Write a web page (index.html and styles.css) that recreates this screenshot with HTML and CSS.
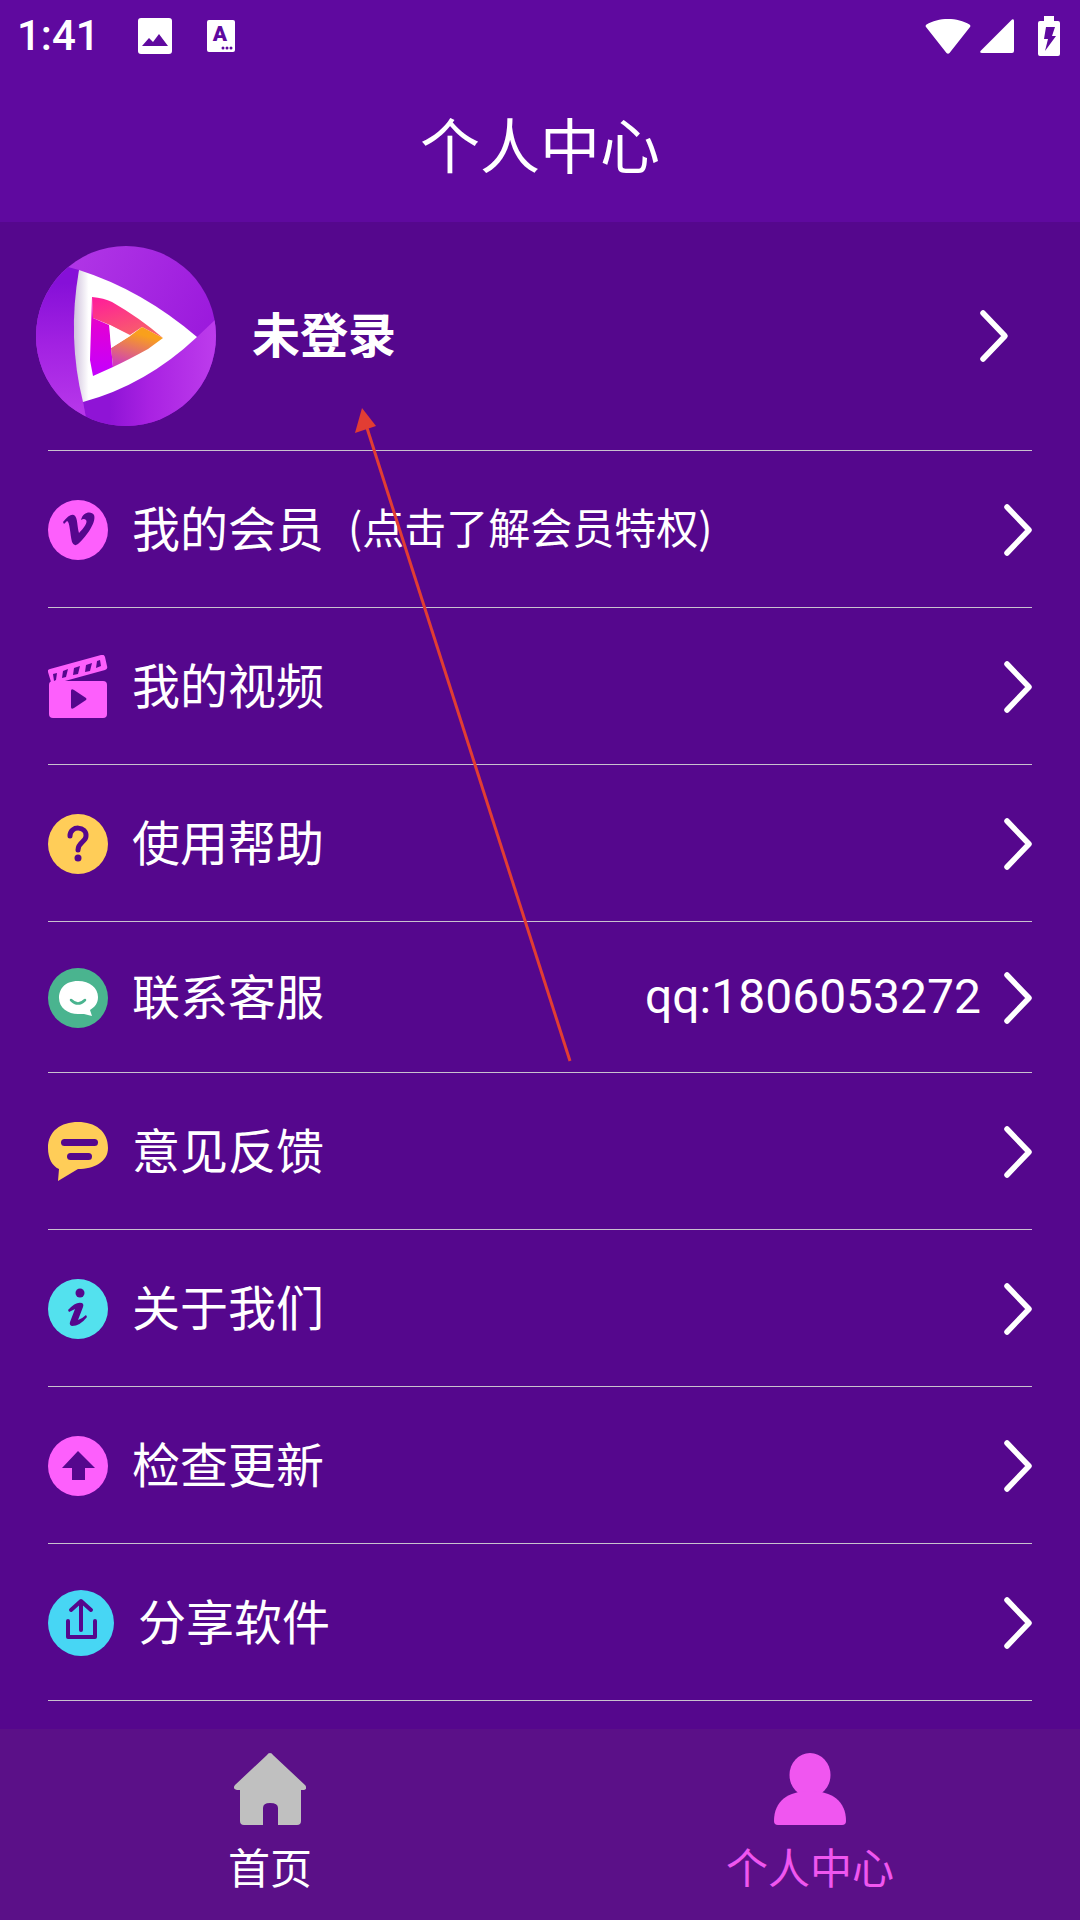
FILE: index.html
```html
<!DOCTYPE html>
<html>
<head>
  <title>个人中心</title>
  <link rel="stylesheet" href="styles.css">
</head>
<body>
  <div class="page">
    <div class="header">
      <div class="status-bar">
        <span class="time">1:41</span>
        <svg class="status-photo" viewBox="0 0 34 36"><rect width="34" height="36" rx="3" fill="#fff"/><path d="M4 28l7-8 4 4 6-8 9 12z" fill="#5f099f"/></svg>
        <svg class="status-a" viewBox="0 0 28 32"><rect width="28" height="32" rx="2" fill="#fff"/><text x="13" y="21" class="status-a-text">A</text><circle cx="16" cy="28" r="1.5" fill="#5f099f"/><circle cx="20" cy="28" r="1.5" fill="#5f099f"/><circle cx="24" cy="28" r="1.5" fill="#5f099f"/></svg>
        <span class="status-spacer"></span>
        <svg class="status-wifi" viewBox="0 0 46 36"><path d="M1 9Q0 8 1.500 6.500C13 -1 33 -1 44.500 6.500Q46 8 45 9L24.500 35Q23 36.500 21.500 35z" fill="#fff"/></svg>
        <svg class="status-signal" viewBox="0 0 34 34"><path d="M32 .5Q34 -.5 34 2V32Q34 34 32 34H2Q-.5 34 .5 32z" fill="#fff"/></svg>
        <svg class="status-battery" viewBox="0 0 22 40"><path d="M6 0H16V5H20Q22 5 22 7V38Q22 40 20 40H2Q0 40 0 38V7Q0 5 2 5H6z" fill="#fff"/><path d="M8 11H17L14 20H18L7 35L10 23H6z" fill="#5f099f"/></svg>
      </div>
      <div class="title">个人中心</div>
    </div>

    <div class="content">
      <div class="profile">
        <svg class="avatar" viewBox="0 0 180 180">
          <defs>
            <clipPath id="avatarClip"><circle cx="90" cy="90" r="90"/></clipPath>
            <linearGradient id="avatarTop" x1="0" y1="0" x2="1" y2="0.5"><stop offset="0" stop-color="#b53ce8"/><stop offset="1" stop-color="#9a18dc"/></linearGradient>
            <linearGradient id="avatarBottom" x1="0" y1="0" x2="1" y2="0"><stop offset="0.2" stop-color="#8f14d6"/><stop offset="0.5" stop-color="#a922e2"/><stop offset="1" stop-color="#bd3cec"/></linearGradient>
            <linearGradient id="avatarLeft" x1="0" y1="0" x2="0" y2="1"><stop offset="0.1" stop-color="#8610d8"/><stop offset="0.5" stop-color="#a322e2"/><stop offset="0.9" stop-color="#b636ea"/></linearGradient>
            <linearGradient id="innerLeft" x1="0" y1="0" x2="0" y2="1"><stop offset="0" stop-color="#f010a8"/><stop offset="0.4" stop-color="#e000d8"/><stop offset="1" stop-color="#c400ff"/></linearGradient>
            <linearGradient id="innerTop" x1="0" y1="0" x2="0.5" y2="1"><stop offset="0" stop-color="#ff1a9c"/><stop offset="1" stop-color="#f8606a"/></linearGradient>
            <linearGradient id="innerBottom" x1="0.7" y1="0" x2="0.3" y2="1"><stop offset="0.2" stop-color="#f9a01c"/><stop offset="1" stop-color="#d040b8"/></linearGradient>
            <linearGradient id="whiteEdge" x1="0" y1="0" x2="1" y2="0"><stop offset="0" stop-color="#cfc2dc"/><stop offset="0.12" stop-color="#fff"/></linearGradient>
          </defs>
          <g clip-path="url(#avatarClip)">
            <rect width="180" height="180" fill="url(#avatarTop)"/>
            <path d="M47 156L161 91L180 73V180H60L50 172z" fill="url(#avatarBottom)"/>
            <path d="M32 21L43 24L38 91L47 156L50 172L0 180V30z" fill="url(#avatarLeft)"/>
          </g>
          <path d="M43 24Q106 44 161 91Q110 139 47 156Q31 92 43 24z" fill="url(#whiteEdge)"/>
          <path d="M56 51Q68 52 76 56Q104 72 127 92L106 81L94 89L74 79L57 72z" fill="url(#innerTop)"/>
          <path d="M56 51L57 72L73 79L77 121L57 130L54 114z" fill="url(#innerLeft)"/>
          <path d="M75 102L94 90L106 81L127 92L112 103Q92 114 77 121z" fill="url(#innerBottom)"/>
          <path d="M74 79L94 90L75 102z" fill="#fff"/>
        </svg>
        <span class="profile-name">未登录</span>
        <svg class="chevron chevron-profile" viewBox="0 0 30 54"><path d="M4 4L26 27L4 50"/></svg>
      </div>

      <div class="row">
        <svg class="icon" viewBox="0 0 60 60"><circle cx="30" cy="30" r="30" fill="#fd5ffc"/><path d="M15 22Q22 13 26 15C30 17 29 28 31 33C36 28 40 22 38 20Q36 18 33 20C35 11 44 11 46 15C49 23 36 39 30 44Q26 47 24 42C22 34 22 22 19 21L16 24z" fill="#55078d"/></svg>
        <span class="label">我的会员</span>
        <span class="label-note">(点击了解会员特权)</span>
        <svg class="chevron" viewBox="0 0 30 54"><path d="M4 4L26 27L4 50"/></svg>
      </div>

      <div class="row">
        <svg class="icon icon-tall" viewBox="0 0 60 64"><path d="M0 17Q-1 15 2 14L53 0Q56 -1 57 2L59 11Q60 14 57 15L6 29Q4 30 3 27z" fill="#fd5ffc"/><path d="M5 19L9 18L8 25L6 26zM15 16L20 14L18 22L14 23zM26 13L32 11L30 19L25 20zM38 10L44 8L42 16L37 17zM49 6L52 5L53 11L48 13z" fill="#55078d"/><rect x="1" y="26" width="58" height="37" rx="4" fill="#fd5ffc"/><path d="M23 36Q23 33 26 35L38 43Q39 44 38 45L26 53Q23 55 23 52z" fill="#55078d"/></svg>
        <span class="label">我的视频</span>
        <svg class="chevron" viewBox="0 0 30 54"><path d="M4 4L26 27L4 50"/></svg>
      </div>

      <div class="row">
        <svg class="icon" viewBox="0 0 60 60"><circle cx="30" cy="30" r="30" fill="#ffcd58"/><path class="icon-stroke" d="M22 22C22 11 39 12 38 22C38 28 30 28 30 36" stroke-width="5"/><circle cx="30" cy="44" r="3.500" fill="#55078d"/></svg>
        <span class="label">使用帮助</span>
        <svg class="chevron" viewBox="0 0 30 54"><path d="M4 4L26 27L4 50"/></svg>
      </div>

      <div class="row row-short">
        <svg class="icon" viewBox="0 0 60 60"><circle cx="30" cy="30" r="30" fill="#4ab48f"/><path d="M30 13C16 13 11 22 11 30C11 40 20 46 30 46H36L44 48L42 42C47 39 50 35 50 29C50 20 42 13 30 13z" fill="#fff"/><path class="icon-stroke icon-stroke-green" d="M23 32Q30 39 37 32" stroke-width="2.500"/></svg>
        <span class="label">联系客服</span>
        <span class="row-value">qq:1806053272</span>
        <svg class="chevron chevron-value" viewBox="0 0 30 54"><path d="M4 4L26 27L4 50"/></svg>
      </div>

      <div class="row">
        <svg class="icon" viewBox="0 0 60 60"><path d="M30 0C47 0 60 9 60 26C60 40 46 47 30 47L10 59L11 47C4 44 0 36 0 26C0 9 13 0 30 0z" fill="#ffcd58"/><rect x="13" y="17" width="37" height="7" rx="3.500" fill="#55078d"/><rect x="19" y="31" width="25" height="7" rx="3.500" fill="#55078d"/></svg>
        <span class="label">意见反馈</span>
        <svg class="chevron" viewBox="0 0 30 54"><path d="M4 4L26 27L4 50"/></svg>
      </div>

      <div class="row">
        <svg class="icon" viewBox="0 0 60 60"><circle cx="30" cy="30" r="30" fill="#53e1ee"/><circle cx="32" cy="14" r="4.500" fill="#55078d"/><path d="M20 31Q28 22 34 24Q36 25 35 28L30 41Q35 39 38 36L39 38Q32 47 24 47Q21 46 22 43L27 30L21 33z" fill="#55078d"/></svg>
        <span class="label">关于我们</span>
        <svg class="chevron" viewBox="0 0 30 54"><path d="M4 4L26 27L4 50"/></svg>
      </div>

      <div class="row">
        <svg class="icon" viewBox="0 0 60 60"><circle cx="30" cy="30" r="30" fill="#fd5ffc"/><path d="M30 15L47 32H37V44H24V32H14z" fill="#55078d"/></svg>
        <span class="label">检查更新</span>
        <svg class="chevron" viewBox="0 0 30 54"><path d="M4 4L26 27L4 50"/></svg>
      </div>

      <div class="row">
        <svg class="icon icon-wide" viewBox="0 0 66 66"><circle cx="33" cy="33" r="33" fill="#47d6f4"/><path class="icon-stroke" d="M33 40V12M23 20L33 11L43 20M20 31V47H47V31" stroke-width="4"/></svg>
        <span class="label">分享软件</span>
        <svg class="chevron" viewBox="0 0 30 54"><path d="M4 4L26 27L4 50"/></svg>
      </div>
    </div>

    <div class="tabbar">
      <div class="tab">
        <svg class="tab-icon" viewBox="0 0 72 72"><path d="M36 0Q38 0 39 2L71 32Q74 36 70 37H67V68Q67 72 63 72H44V55Q44 50 36 50Q29 50 29 55V72H10Q6 72 6 68V37H3Q-2 36 1 32L33 2Q34 0 36 0z" fill="#c0c0c0"/></svg>
        <span class="tab-label">首页</span>
      </div>
      <div class="tab tab-active">
        <svg class="tab-icon" viewBox="0 0 72 72"><ellipse cx="36" cy="22" rx="20.500" ry="22" fill="#f056f0"/><path d="M0 68C0 48 14 38 36 38C58 38 72 48 72 68Q72 72 68 72H4Q0 72 0 68z" fill="#f056f0"/></svg>
        <span class="tab-label">个人中心</span>
      </div>
    </div>

    <svg class="annotation" viewBox="0 0 1080 1920">
      <path d="M570 1061L367 428" stroke="#e23d33" stroke-width="3" fill="none"/>
      <path d="M362 408L355 433L376 426z" fill="#e23d33"/>
    </svg>
  </div>
</body>
</html>
```

FILE: styles.css
```css
html, body {
  margin: 0;
  padding: 0;
}

body {
  font-family: "Noto Sans CJK SC", "Noto Sans", sans-serif;
  color: #fff;
}

.page {
  position: relative;
  width: 1080px;
  height: 1920px;
  display: flex;
  flex-direction: column;
  overflow: hidden;
  background-color: #55078d;
}

.header {
  height: 222px;
  background-color: #5f099f;
}

.status-bar {
  height: 71px;
  display: flex;
  align-items: center;
  padding: 0 20px 0 17px;
}

.time {
  width: 121px;
  font-family: Roboto, sans-serif;
  font-size: 42px;
  font-weight: 500;
}

.status-photo {
  width: 34px;
  height: 36px;
}

.status-a {
  width: 28px;
  height: 32px;
  margin-left: 35px;
}

.status-a-text {
  font-family: Roboto, sans-serif;
  font-size: 21px;
  font-weight: 900;
  text-anchor: middle;
  fill: #5f099f;
}

.status-spacer {
  flex: 1;
}

.status-wifi {
  width: 46px;
  height: 36px;
}

.status-signal {
  width: 34px;
  height: 34px;
  margin-left: 9px;
}

.status-battery {
  width: 22px;
  height: 40px;
  margin-left: 24px;
}

.title {
  height: 150px;
  line-height: 144px;
  text-align: center;
  font-size: 60px;
}

.content {
  flex: 1;
}

.profile {
  height: 229px;
  display: flex;
  align-items: center;
  padding: 0 71px 1px 36px;
  box-sizing: border-box;
  position: relative;
}

.profile::after,
.row::after {
  content: "";
  position: absolute;
  left: 48px;
  right: 48px;
  bottom: 0;
  height: 1px;
  background-color: #c9c1cf;
}

.avatar {
  width: 180px;
  height: 180px;
  margin-right: 36px;
}

.profile-name {
  flex: 1;
  font-size: 48px;
  font-weight: 700;
  position: relative;
  top: -4px;
}

.row {
  position: relative;
  height: 157px;
  display: flex;
  align-items: center;
  padding: 0 47px 0 48px;
  box-sizing: border-box;
}

.row-short {
  height: 151px;
}

.icon {
  width: 60px;
  height: 60px;
  margin-right: 24px;
  flex: none;
}

.icon-tall {
  height: 64px;
}

.icon-wide {
  width: 66px;
  height: 66px;
}

.icon-stroke {
  fill: none;
  stroke: #55078d;
  stroke-linecap: round;
  stroke-linejoin: round;
}

.icon-stroke-green {
  stroke: #4ab48f;
}

.label {
  font-size: 48px;
  position: relative;
  top: -4px;
}

.label-note {
  margin-left: 24px;
  font-size: 42px;
  position: relative;
  top: -4px;
}

.row-value {
  margin-left: auto;
  font-family: Roboto, sans-serif;
  font-size: 48px;
  position: relative;
  top: -1px;
}

.chevron {
  width: 30px;
  height: 54px;
  margin-left: auto;
  flex: none;
}

.chevron-value {
  margin-left: 22px;
}

.chevron path {
  fill: none;
  stroke: #fff;
  stroke-width: 5.5px;
  stroke-linecap: round;
  stroke-linejoin: round;
}

.tabbar {
  height: 191px;
  display: flex;
  background-color: #5b1088;
}

.tab {
  flex: 1;
  display: flex;
  flex-direction: column;
  align-items: center;
  padding-top: 24px;
}

.tab-icon {
  width: 72px;
  height: 72px;
}

.tab-label {
  margin-top: 13px;
  font-size: 42px;
  line-height: 56px;
}

.tab-active .tab-label {
  color: #f056f0;
}

.annotation {
  position: absolute;
  left: 0;
  top: 0;
  width: 1080px;
  height: 1920px;
  pointer-events: none;
}
```
